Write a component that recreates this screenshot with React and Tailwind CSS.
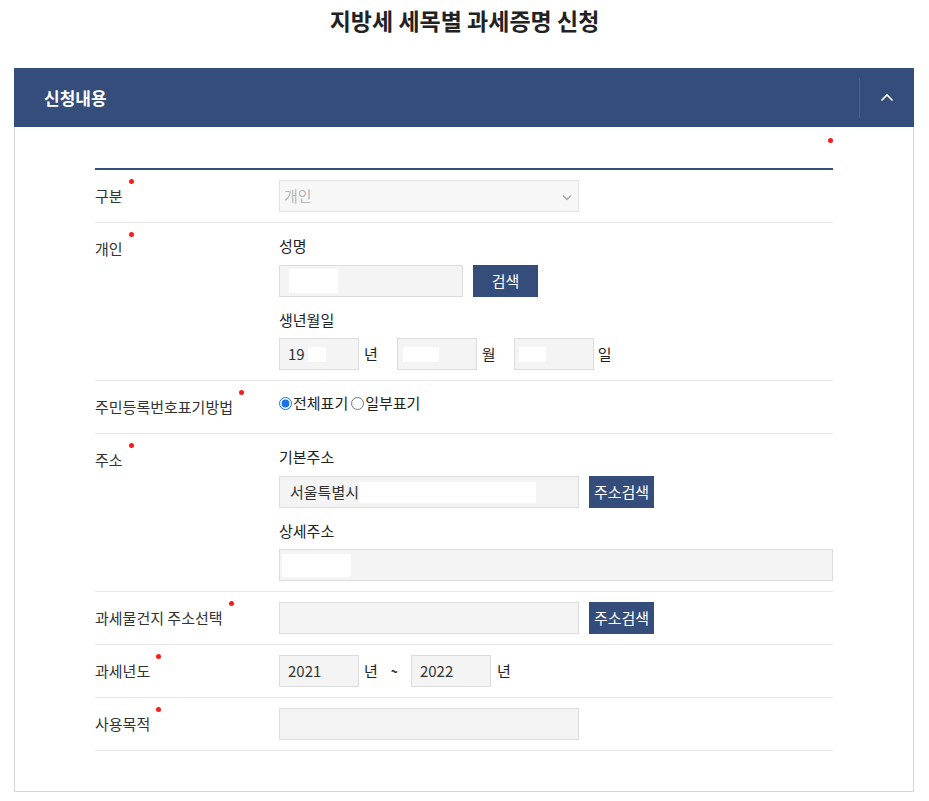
import React from "react";

const Dot = () => (
  <span className="absolute top-[-7px] right-[-11px] w-[5px] h-[5px] rounded-full bg-[#ff1a1a]" />
);

const Label = ({ children }) => (
  <div className="w-[184px] shrink-0 h-8 flex items-center">
    <span className="relative inline-block leading-5 text-[15px] text-[#333]">
      {children}
      <Dot />
    </span>
  </div>
);

const Row = ({ label, children }) => (
  <div className="flex border-b border-[#e6e6e6] py-[10px]">
    <Label>{label}</Label>
    <div className="flex-1 min-w-0">{children}</div>
  </div>
);

const Box = ({ className = "", children }) => (
  <div
    className={
      "h-8 bg-[#f4f4f4] border border-[#dcdcdc] flex items-center text-[15px] text-[#333] leading-5 " +
      className
    }
  >
    {children}
  </div>
);

const Btn = ({ children, className = "" }) => (
  <button
    className={
      "h-8 w-[65px] bg-[#344d7a] text-white text-[15px] leading-5 flex items-center justify-center " +
      className
    }
  >
    {children}
  </button>
);

const SubLabel = ({ children, first = false }) => (
  <div
    className={
      "leading-5 text-[15px] text-[#222] " +
      (first ? "mt-[3px] mb-[9px]" : "mt-[13px] mb-[8px]")
    }
  >
    {children}
  </div>
);

export default function App() {
  return (
    <div className="min-h-screen bg-white font-['Noto_Sans_CJK_KR','Noto_Sans',sans-serif] text-[#333]">
      <h1 className="text-center text-[23px] font-bold leading-[40px] text-[#222]">
        지방세 세목별 과세증명 신청
      </h1>

      <div className="mt-[28px] ml-[14px] w-[900px]">
        <div className="h-[59px] bg-[#344d7a] flex items-center justify-between pl-[30px]">
          <span className="text-white font-bold text-[17px] leading-6">신청내용</span>
          <div className="flex items-center h-full">
            <div className="w-px h-[40px] bg-[#4b6290]" />
            <button className="w-[54px] h-full flex items-center justify-center">
              <svg width="14" height="9" viewBox="0 0 14 9" fill="none">
                <polyline
                  points="1.5,7.5 7,2 12.5,7.5"
                  stroke="white"
                  strokeWidth="1.6"
                />
              </svg>
            </button>
          </div>
        </div>

        <div className="border border-t-0 border-[#d5d5d5] px-[80px] pb-[40px]">
          <div className="h-[41px] pt-[11px] flex justify-end">
            <span className="w-[5px] h-[5px] rounded-full bg-[#ff1a1a]" />
          </div>
          <div className="h-[2px] bg-[#344d7a]" />

          <Row label="구분">
            <div className="relative w-[300px] h-8 bg-[#f7f7f7] border border-[#e2e2e2] flex items-center pl-[4px] text-[15px] leading-5 text-[#b8b8b8]">
              개인
              <svg
                className="absolute right-[6px] top-[13px]"
                width="10"
                height="7"
                viewBox="0 0 10 7"
                fill="none"
              >
                <polyline points="1,1.5 5,5.5 9,1.5" stroke="#a8a8a8" strokeWidth="1.4" />
              </svg>
            </div>
          </Row>

          <Row label="개인">
            <SubLabel first>성명</SubLabel>
            <div className="flex items-center">
              <Box className="w-[184px] pl-[9px]">
                <span className="w-[49px] h-[24px] bg-white" />
              </Box>
              <Btn className="ml-[10px]">검색</Btn>
            </div>
            <SubLabel>생년월일</SubLabel>
            <div className="flex items-center text-[15px] leading-5 text-[#222]">
              <Box className="w-[80px] pl-[8px]">
                <span>19</span>
                <span className="w-[18px] h-[15px] bg-white ml-[3px]" />
              </Box>
              <span className="ml-[5px]">년</span>
              <Box className="ml-[19px] w-[80px] pl-[5px]">
                <span className="w-[36px] h-[15px] bg-white" />
              </Box>
              <span className="ml-[5px]">월</span>
              <Box className="ml-[18px] w-[80px] pl-[4px]">
                <span className="w-[27px] h-[15px] bg-white" />
              </Box>
              <span className="ml-[4px]">일</span>
            </div>
          </Row>

          <Row label="주민등록번호표기방법">
            <div className="flex items-center h-6 text-[15px] leading-5 text-[#222]">
              <input
                type="radio"
                name="rrn"
                defaultChecked
                className="m-0 w-[13px] h-[13px] accent-[#1a73e8]"
              />
              <span className="ml-[1px]">전체표기</span>
              <input
                type="radio"
                name="rrn"
                className="m-0 ml-[3px] w-[13px] h-[13px]"
              />
              <span className="ml-[1px]">일부표기</span>
            </div>
          </Row>

          <Row label="주소">
            <SubLabel first>기본주소</SubLabel>
            <div className="flex items-center">
              <Box className="w-[300px] pl-[10px]">
                <span>서울특별시</span>
                <span className="w-[177px] h-[21px] bg-white" />
              </Box>
              <Btn className="ml-[10px]">주소검색</Btn>
            </div>
            <SubLabel>상세주소</SubLabel>
            <Box className="w-full pl-[2px]">
              <span className="w-[69px] h-[23px] bg-white" />
            </Box>
          </Row>

          <Row label="과세물건지 주소선택">
            <div className="flex items-center">
              <Box className="w-[300px]" />
              <Btn className="ml-[10px]">주소검색</Btn>
            </div>
          </Row>

          <Row label="과세년도">
            <div className="flex items-center text-[15px] leading-5 text-[#222]">
              <Box className="w-[80px] pl-[8px]">2021</Box>
              <span className="ml-[5px]">년</span>
              <span className="ml-[13px] font-bold text-[12px]">~</span>
              <Box className="ml-[13px] w-[80px] pl-[8px]">2022</Box>
              <span className="ml-[6px]">년</span>
            </div>
          </Row>

          <Row label="사용목적">
            <Box className="w-[300px]" />
          </Row>
        </div>
      </div>
    </div>
  );
}
